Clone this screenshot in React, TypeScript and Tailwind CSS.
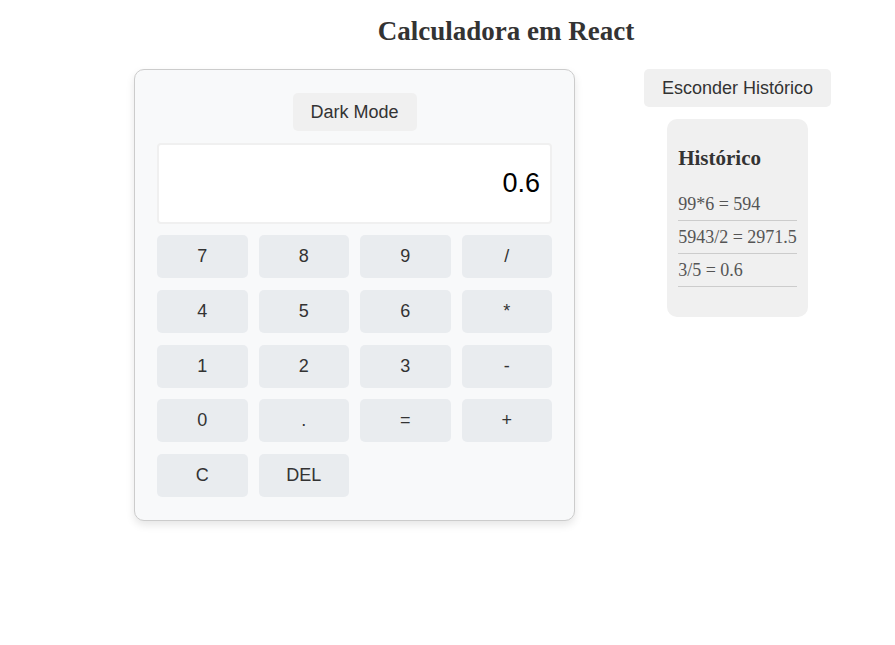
import React, { useState } from "react";

const keys = ["7", "8", "9", "/", "4", "5", "6", "*", "1", "2", "3", "-", "0", ".", "=", "+", "C", "DEL"];

const history = ["99*6 = 594", "5943/2 = 2971.5", "3/5 = 0.6"];

const App = () => {
  const [showHistory, setShowHistory] = useState(true);

  return (
    <div className="min-h-screen bg-white font-['Liberation_Sans',Arial,sans-serif] text-[#333]">
      <h1 className="pt-[16px] pl-[117px] text-center font-['Liberation_Serif','Times_New_Roman',serif] text-[27px] font-bold leading-[31px] text-[#333]">
        Calculadora em React
      </h1>
      <div className="mt-[22px] flex items-start pl-[134px]">
        <div className="w-[441px] rounded-[10px] border border-[#ccc] bg-[#f8f9fa] px-[22px] pt-[23px] pb-[23px] shadow-[0_4px_8px_rgba(0,0,0,0.1)]">
          <div className="flex justify-center">
            <button className="h-[38px] w-[124px] rounded-[5px] bg-[#f0f0f0] text-[18px] text-[#333]">
              Dark Mode
            </button>
          </div>
          <div className="mt-[12px] flex h-[81px] items-center justify-end rounded-[4px] border-2 border-[#f0f0f0] bg-white pr-[10px] text-[27px] text-black">
            0.6
          </div>
          <div className="mt-[11px] grid grid-cols-4 gap-x-[11px] gap-y-[11.75px]">
            {keys.map((k) => (
              <button
                key={k}
                className="h-[43px] rounded-[5px] bg-[#e9ecef] text-[18px] text-[#333]"
              >
                {k}
              </button>
            ))}
          </div>
        </div>
        <div className="ml-[69px] flex flex-col items-center">
          <button
            onClick={() => setShowHistory(!showHistory)}
            className="h-[38px] w-[187px] rounded-[5px] bg-[#f0f0f0] text-[18px] text-[#333]"
          >
            {showHistory ? "Esconder Histórico" : "Mostrar Histórico"}
          </button>
          {showHistory && (
            <div className="mt-[12px] rounded-[10px] bg-[#f0f0f0] px-[11px] pt-[27px] pb-[30px] font-['Liberation_Serif','Times_New_Roman',serif]">
              <h3 className="text-[21px] font-bold leading-[24px] text-[#333]">Histórico</h3>
              <ul className="mt-[18px]">
                {history.map((h) => (
                  <li
                    key={h}
                    className="border-b border-[#ccc] py-[6px] text-[18px] leading-[20px] text-[#555]"
                  >
                    {h}
                  </li>
                ))}
              </ul>
            </div>
          )}
        </div>
      </div>
    </div>
  );
};

export default App;
